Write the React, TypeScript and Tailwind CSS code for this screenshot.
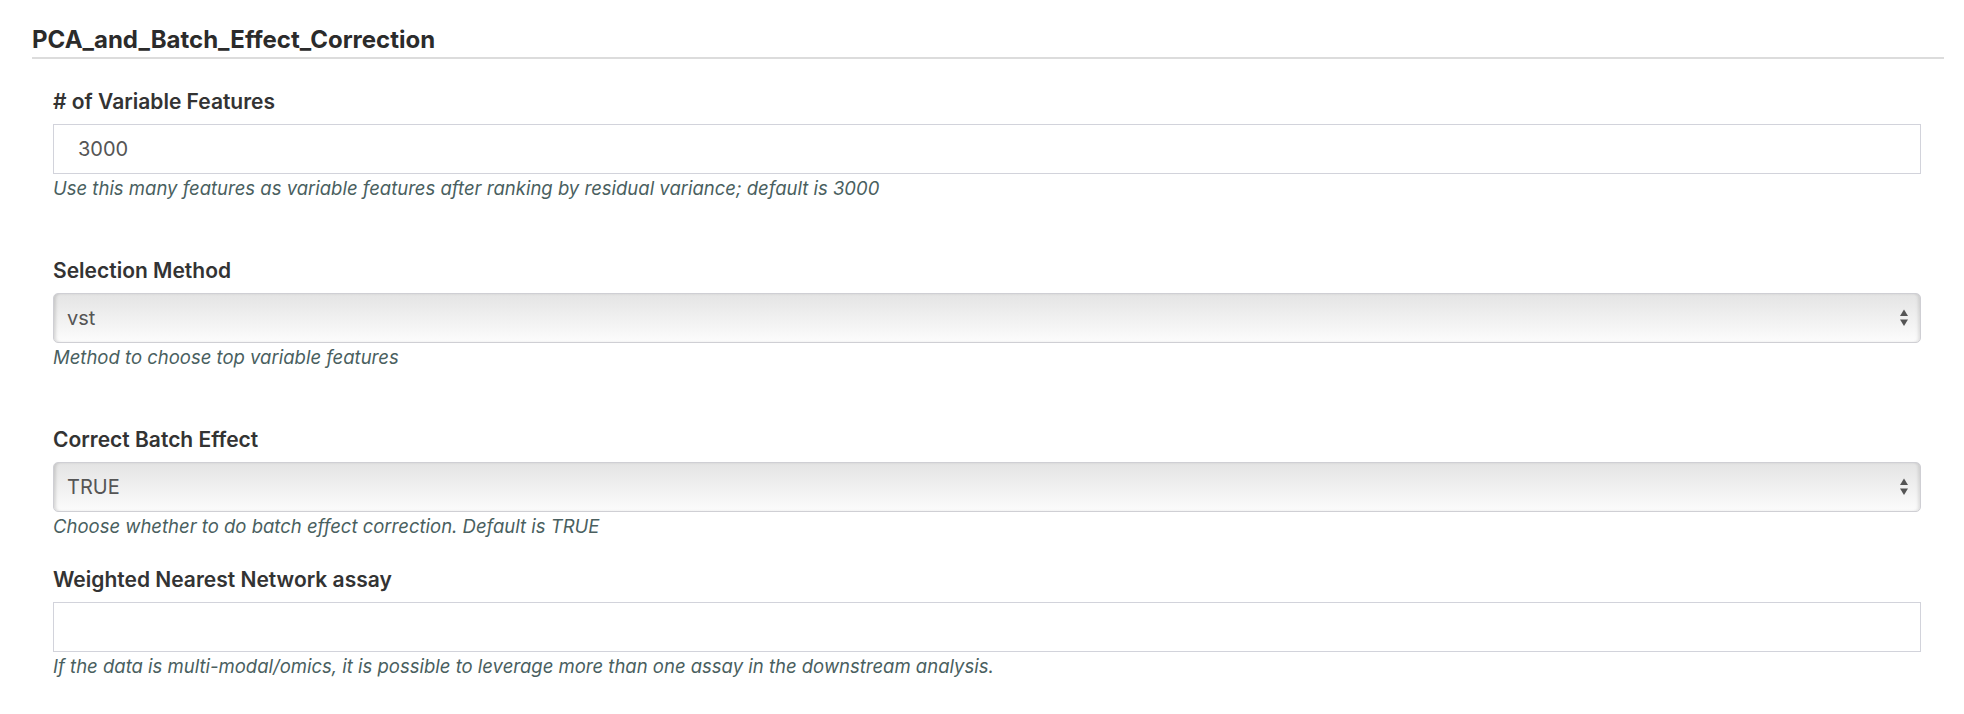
import React from 'react';

type Field = {
  label: string;
  kind: 'input' | 'select';
  value: string;
  help: string;
  gapAfter: string;
};

const fields: Field[] = [
  {
    label: '# of Variable Features',
    kind: 'input',
    value: '3000',
    help: 'Use this many features as variable features after ranking by residual variance; default is 3000',
    gapAfter: 'mb-[57px]',
  },
  {
    label: 'Selection Method',
    kind: 'select',
    value: 'vst',
    help: 'Method to choose top variable features',
    gapAfter: 'mb-[57px]',
  },
  {
    label: 'Correct Batch Effect',
    kind: 'select',
    value: 'TRUE',
    help: 'Choose whether to do batch effect correction. Default is TRUE',
    gapAfter: 'mb-[28px]',
  },
  {
    label: 'Weighted Nearest Network assay',
    kind: 'input',
    value: '',
    help: 'If the data is multi-modal/omics, it is possible to leverage more than one assay in the downstream analysis.',
    gapAfter: 'mb-0',
  },
];

const SelectArrows = () => (
  <svg width="10" height="20" viewBox="0 0 10 20" className="absolute right-[11px] top-1/2 -translate-y-1/2">
    <path d="M1 8 L5 1.5 L9 8 Z" fill="#555" />
    <path d="M1 11.5 L9 11.5 L5 18 Z" fill="#555" />
  </svg>
);

const FormField: React.FC<{ field: Field }> = ({ field }) => {
  return (
    <div className={field.gapAfter}>
      <label className="block text-[21px] leading-[26px] font-semibold text-[#333] mb-[9px]">{field.label}</label>
      {field.kind === 'input' ? (
        <div className="h-[50px] border border-[#d2d3db] bg-white flex items-center px-[24px] text-[20px] text-[#555]">
          {field.value}
        </div>
      ) : (
        <div className="relative h-[50px] border border-[#cfcfd4] rounded-[5px] bg-gradient-to-b from-[#e4e4e4] to-[#fcfcfc] shadow-[inset_3px_0_3px_-1px_rgba(0,0,0,0.13),inset_-3px_0_3px_-1px_rgba(0,0,0,0.1)] flex items-center px-[13px] text-[20px] text-[#555]">
          {field.value}
          <SelectArrows />
        </div>
      )}
      <p className="text-[18.5px] leading-[26px] italic text-[#4a5f5f] mt-[1px]">{field.help}</p>
    </div>
  );
};

export default function App() {
  return (
    <div className="min-h-[714px] bg-white pl-[32px] pr-[20px] pt-[25px]" style={{ fontFamily: 'Inter, "Liberation Sans", sans-serif' }}>
      <h2 className="text-[24px] leading-[30px] font-bold text-[#2b2b2b] pb-[2px] border-b-2 border-[#dcdcdc]">
        PCA_and_Batch_Effect_Correction
      </h2>
      <div className="pl-[21px] pr-[23px] pt-[30px]">
        {fields.map((f) => (
          <FormField key={f.label} field={f} />
        ))}
      </div>
    </div>
  );
}
